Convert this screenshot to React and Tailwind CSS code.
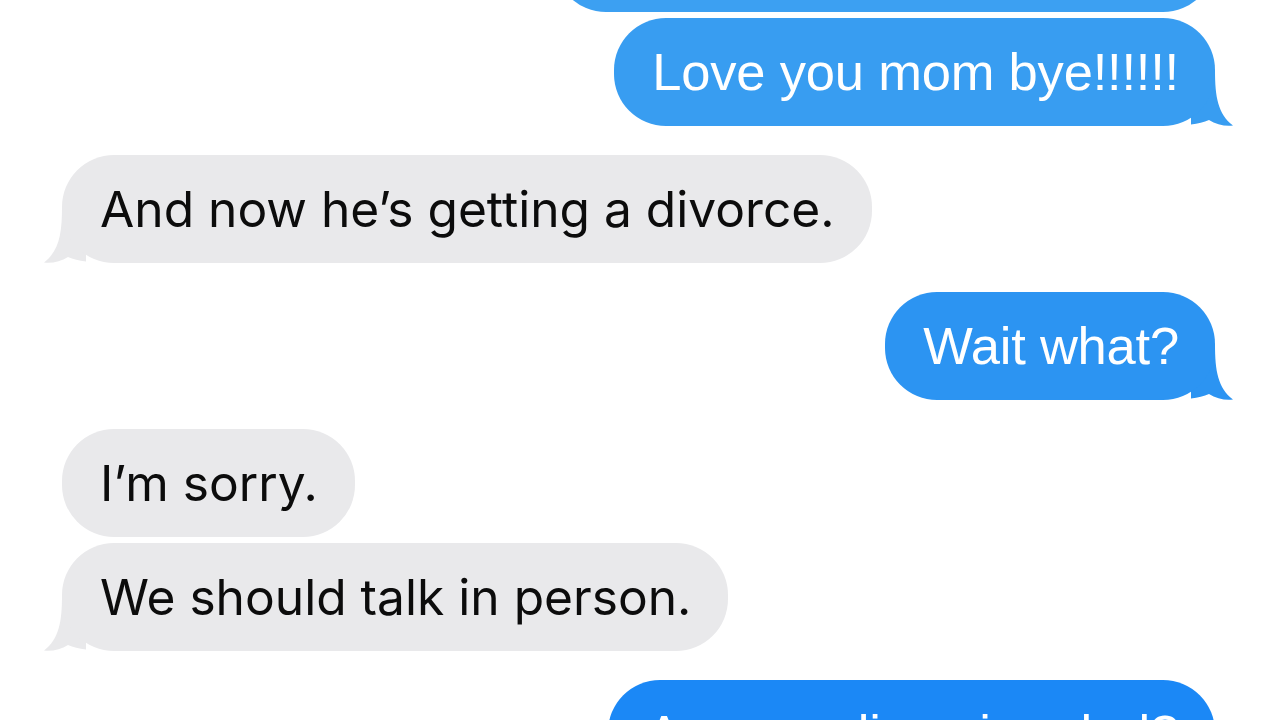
import React from 'react'

const messages = [
    { id: 1, from: 'me', text: 'I have to go to class now!', tail: false, color: 'bg-[#3ca0f2]', first: true },
    { id: 2, from: 'me', text: 'Love you mom bye!!!!!!', tail: true, color: 'bg-[#389df1]' },
    { id: 3, from: 'mom', text: 'And now he’s getting a divorce.', tail: true },
    { id: 4, from: 'me', text: 'Wait what?', tail: true, color: 'bg-[#2c94f2]' },
    { id: 5, from: 'mom', text: 'I’m sorry.', tail: false },
    { id: 6, from: 'mom', text: 'We should talk in person.', tail: true },
    { id: 7, from: 'me', text: 'Are you divorcing dad?', tail: true, color: 'bg-[#1b88f6]' },
]

const tailColors = {
    'bg-[#3ca0f2]': '#3ca0f2',
    'bg-[#389df1]': '#389df1',
    'bg-[#2c94f2]': '#2c94f2',
    'bg-[#1b88f6]': '#1b88f6',
}

// iMessage style tail, drawn for the right side; mirrored for incoming
const Tail = ({ fill, flip }) => (
    <svg
        width="44"
        height="56"
        viewBox="0 0 44 56"
        className={`absolute bottom-0 ${flip ? '-left-[20px] -scale-x-100' : '-right-[20px]'}`}
    >
        <path
            d="M0 0 L24 0 C24 27 27 44 42 55.5 C34 56.5 25 54.5 18 50 C13 52 7 54 0 54.5 Z"
            fill={fill}
        />
    </svg>
)

const Bubble = ({ msg, prev }) => {
    const mine = msg.from === 'me'
    const sameGroup = prev && prev.from === msg.from
    const spacing = msg.first ? '-mt-[96px]' : sameGroup ? 'mt-[6px]' : 'mt-[29px]'
    const tailFill = mine ? tailColors[msg.color] : '#e9e9eb'

    return (
        <div className={`flex ${mine ? 'justify-end' : 'justify-start'} ${spacing}`}>
            <div className="relative">
                {msg.tail && <Tail fill={tailFill} flip={!mine} />}
                <div
                    className={`relative rounded-[52px] h-[108px] flex items-center whitespace-nowrap ${
                        mine
                            ? `${msg.color} text-white pl-[38px] pr-[36px] text-[52.5px] font-['Liberation_Sans',Arial,sans-serif] tracking-[-0.2px]`
                            : "bg-[#e9e9eb] text-[#0c0c0c] pl-[38px] pr-[37px] text-[49.7px] font-['Inter','Noto_Sans',sans-serif]"
                    }`}
                >
                    <span className="leading-[52px]">{msg.text}</span>
                </div>
            </div>
        </div>
    )
}

export default function App() {
    return (
        <div className="w-[1280px] h-[720px] overflow-hidden bg-white">
            <div className="flex flex-col pl-[62px] pr-[65px]">
                {messages.map((m, i) => (
                    <Bubble key={m.id} msg={m} prev={messages[i - 1]} />
                ))}
            </div>
        </div>
    )
}
